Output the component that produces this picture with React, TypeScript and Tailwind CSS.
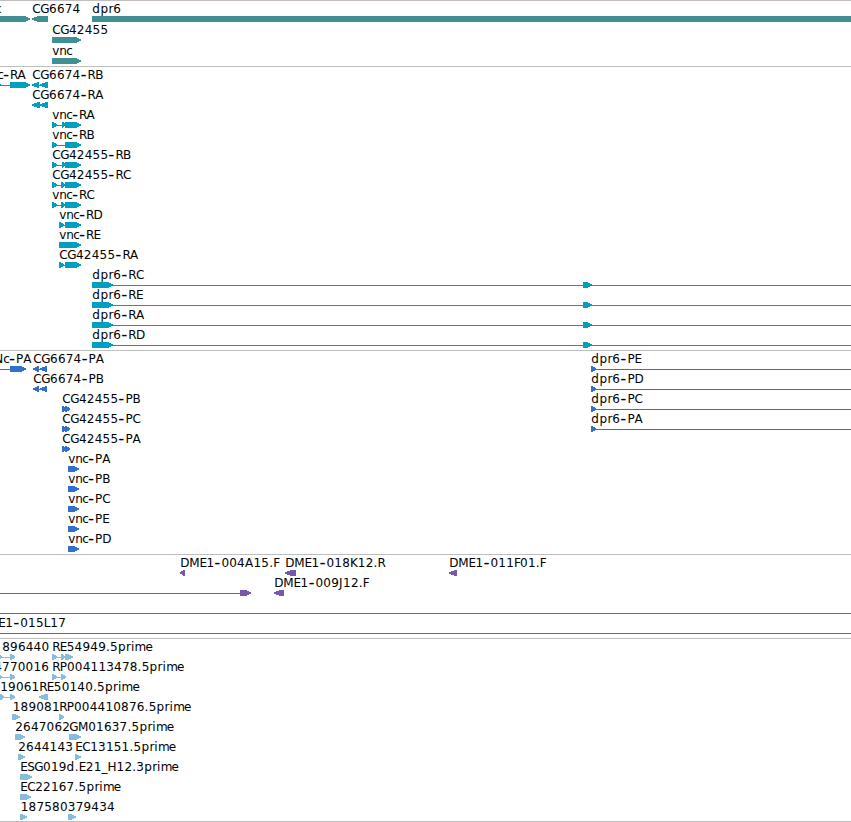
type Label = [x: number, text: string];
type Arrow = [start: number, end: number];

type Row = {
  labels?: Label[];
  right?: Arrow[];
  left?: Arrow[];
  bars?: Arrow[];
  lines?: Arrow[];
};

type Track = {
  id: string;
  color: string;
  rows: Row[];
};

const W = 851;

// Horizontal advance of each label glyph, in pixels
const ADVANCE: Record<string, number> = {
  "-": 7.2, ".": 4.1, _: 6, A: 8.5, B: 7, C: 8, D: 9, E: 7, F: 6, G: 8.8, H: 9, J: 4, K: 7.8, L: 6.5,
  M: 10.2, N: 9, P: 7.2, R: 7.6, S: 7, c: 5.6, d: 8.2, e: 7.5, i: 3.7, m: 10.8, n: 7, p: 8, r: 4.9, v: 7,
};

const placeGlyphs = (x: number, text: string) => {
  let pen = x;
  return Array.from(text).map((ch) => {
    const at = pen;
    pen += ADVANCE[ch] ?? 7.85;
    return { ch, at };
  });
};

const rightArrow = ([a, b]: Arrow) => {
  const neck = Math.max(a + 1, b - 6);
  const tip = b - 0.6;
  return `${a},15 ${neck},15 ${tip},17.4 ${tip},18.6 ${neck},21 ${a},21`;
};

const leftArrow = ([a, b]: Arrow) => {
  const neck = Math.min(b - 1, a + 6);
  return `${b},15 ${neck},15 ${a},17.4 ${a},18.6 ${neck},21 ${b},21`;
};

const tracks: Track[] = [
  {
    id: "gene",
    color: "#408f93",
    rows: [
      { labels: [[-14.2, "Nc"], [32, "CG6674"], [92, "dpr6"]], right: [[-10, 31]], left: [[32, 48]], bars: [[92, W]] },
      { labels: [[52, "CG42455"]], right: [[52, 82]] },
      { labels: [[52, "vnc"]], right: [[52, 82]] },
    ],
  },
  {
    id: "transcript",
    color: "#009fbf",
    rows: [
      { labels: [[-12, "Nc-RA"], [32, "CG6674-RB"]], right: [[-4, 2], [10, 31]], left: [[32, 39], [40, 48]], lines: [[0, 10], [37, 46]] },
      { labels: [[32, "CG6674-RA"]], left: [[32, 40], [40, 48]], lines: [[37, 46]] },
      { labels: [[52, "vnc-RA"]], right: [[52, 58], [62, 66], [65, 82]], lines: [[52, 65]] },
      { labels: [[52, "vnc-RB"]], right: [[52, 58], [65, 82]], lines: [[52, 65]] },
      { labels: [[52, "CG42455-RB"]], right: [[52, 58], [62, 66], [65, 82]], lines: [[52, 65]] },
      { labels: [[52, "CG42455-RC"]], right: [[52, 58], [61, 66], [65, 82]], lines: [[52, 65]] },
      { labels: [[52, "vnc-RC"]], right: [[52, 58], [61, 66], [65, 82]], lines: [[52, 65]] },
      { labels: [[59, "vnc-RD"]], right: [[59, 65], [65, 82]], lines: [[60, 66]] },
      { labels: [[59, "vnc-RE"]], right: [[59, 82]] },
      { labels: [[59, "CG42455-RA"]], right: [[59, 65], [65, 82]], lines: [[60, 66]] },
      { labels: [[92, "dpr6-RC"]], right: [[92, 114], [583, 593]], lines: [[107, W]] },
      { labels: [[92, "dpr6-RE"]], right: [[92, 114], [583, 593]], lines: [[107, W]] },
      { labels: [[92, "dpr6-RA"]], right: [[92, 114], [583, 593]], lines: [[107, W]] },
      { labels: [[92, "dpr6-RD"]], right: [[92, 114], [583, 593]], lines: [[107, W]] },
    ],
  },
  {
    id: "cds",
    color: "#326fcf",
    rows: [
      { labels: [[-6, "Nc-PA"], [33, "CG6674-PA"], [591, "dpr6-PE"]], right: [[10, 27], [591, 597]], left: [[33, 39], [40, 47]], lines: [[0, 10], [37, 46], [592, W]] },
      { labels: [[33, "CG6674-PB"], [591, "dpr6-PD"]], left: [[33, 39], [40, 47]], right: [[591, 597]], lines: [[37, 46], [592, W]] },
      { labels: [[62, "CG42455-PB"], [591, "dpr6-PC"]], right: [[62, 67], [65, 71], [591, 597]], lines: [[592, W]] },
      { labels: [[62, "CG42455-PC"], [591, "dpr6-PA"]], right: [[62, 67], [65, 71], [591, 597]], lines: [[592, W]] },
      { labels: [[62, "CG42455-PA"]], right: [[62, 67], [65, 71]] },
      { labels: [[68, "vnc-PA"]], right: [[68, 80]] },
      { labels: [[68, "vnc-PB"]], right: [[68, 80]] },
      { labels: [[68, "vnc-PC"]], right: [[68, 80]] },
      { labels: [[68, "vnc-PE"]], right: [[68, 80]] },
      { labels: [[68, "vnc-PD"]], right: [[68, 80]] },
    ],
  },
  {
    id: "bac",
    color: "#7858a8",
    rows: [
      { labels: [[180, "DME1-004A15.F"], [285, "DME1-018K12.R"], [449, "DME1-011F01.F"]], left: [[180, 185], [285, 296], [449, 457]] },
      { labels: [[274, "DME1-009J12.F"]], right: [[240, 252]], left: [[274, 284]], lines: [[0, 241]] },
      { lines: [[0, W]] },
      { labels: [[-2, "E1-015L17"]], lines: [[0, W]] },
    ],
  },
  {
    id: "est",
    color: "#87bcdf",
    rows: [
      { labels: [[2, "896440"], [52, "RE54949.5prime"]], right: [[-2, 3], [10, 16], [52, 58], [61, 66], [65, 74]], lines: [[0, 12], [52, 64]] },
      { labels: [[-6, "4770016"], [52, "RP004113478.5prime"]], right: [[-2, 3], [10, 16], [52, 58], [61, 67]], lines: [[0, 12], [52, 64]] },
      { labels: [[0, "19061"], [39, "RE50140.5prime"]], right: [[0, 5], [10, 16]], left: [[39, 48]], lines: [[0, 12]] },
      { labels: [[12.5, "189081"], [59, "RP004410876.5prime"]], right: [[12, 21], [59, 65]] },
      { labels: [[15, "2647062"], [69, "GM01637.5prime"]], right: [[15, 26], [69, 82]] },
      { labels: [[18, "2644143"], [75, "EC13151.5prime"]], right: [[18, 26], [75, 82]] },
      { labels: [[20, "ESG019d.E21_H12.3prime"]], right: [[20, 33]] },
      { labels: [[20, "EC22167.5prime"]], right: [[20, 32]] },
      { labels: [[20.5, "187580379434"]], right: [[20, 28], [68, 77]] },
    ],
  },
];

const GlyphLabel = ({ x, text }: { x: number; text: string }) => (
  <text y={12} className="fill-black font-['DejaVu_Sans',sans-serif] text-[12px]">
    {placeGlyphs(x, text).map(({ ch, at }, i) => (
      ch === "-"
        ? <tspan key={i} x={(at + 0.3).toFixed(1)} y={13} className="text-[17px]">{ch}</tspan>
        : <tspan key={i} x={(at + 0.2).toFixed(1)} y={12}>{ch}</tspan>
    ))}
  </text>
);

const TrackRow = ({ row, color, tall }: { row: Row; color: string; tall: boolean }) => (
  <svg width={W} height={tall ? 21 : 20} className="block shrink-0 overflow-visible">
    <g fill={color} shapeRendering="crispEdges">
      {row.lines?.map(([a, b]) => <rect key={`l${a}`} x={a} y={18} width={b - a} height={1} />)}
      {row.bars?.map(([a, b]) => <rect key={`b${a}`} x={a} y={15} width={b - a} height={6} />)}
      {row.right?.map((f) => <polygon key={`r${f[0]}`} points={rightArrow(f)} />)}
      {row.left?.map((f) => <polygon key={`f${f[0]}`} points={leftArrow(f)} />)}
    </g>
    {row.labels?.map(([x, text]) => <GlyphLabel key={text} x={x} text={text} />)}
  </svg>
);

const App = () => (
  <main className="flex h-[822px] w-[851px] flex-col overflow-hidden border-b border-[#bebebe] bg-white">
    {tracks.map((t) => (
      <section
        key={t.id}
        className={`flex flex-col border-t border-[#bebebe] ${t.id === "gene" ? "pb-[2px]" : "pb-[3px]"}`}
      >
        {t.rows.map((row, i) => (
          <TrackRow key={i} row={row} color={t.color} tall={t.id === "gene"} />
        ))}
      </section>
    ))}
  </main>
);

export default App;
